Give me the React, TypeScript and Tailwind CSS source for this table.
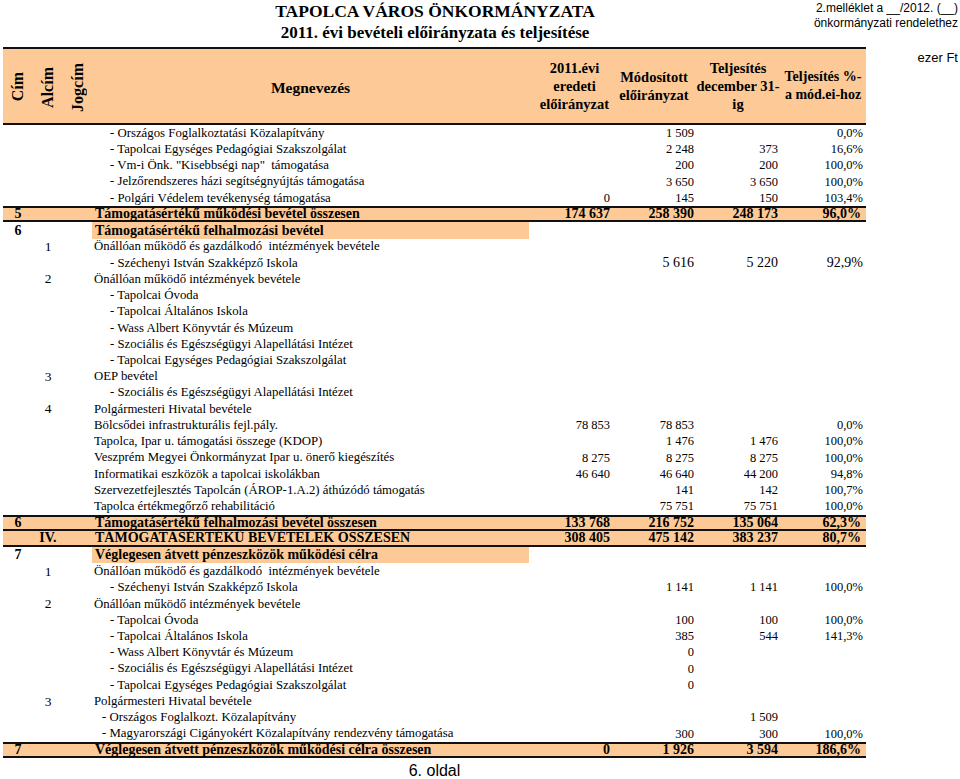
import React from "react";

type Row = {
  kind?: "normal" | "total" | "section";
  cim?: string;
  alcim?: string;
  name: string;
  lvl?: 0 | 1 | 2;
  v?: string[];
  bt?: boolean;
  bb?: boolean;
  big?: boolean;
};

const rows: Row[] = [
  { name: "- Országos Foglalkoztatási Közalapítvány", lvl: 1, v: ["", "1 509", "", "0,0%"] },
  { name: "- Tapolcai Egységes Pedagógiai Szakszolgálat", lvl: 1, v: ["", "2 248", "373", "16,6%"] },
  { name: '- Vm-i Önk. "Kisebbségi nap"  támogatása', lvl: 1, v: ["", "200", "200", "100,0%"] },
  { name: "- Jelzőrendszeres házi segítségnyújtás támogatása", lvl: 1, v: ["", "3 650", "3 650", "100,0%"] },
  { name: "- Polgári Védelem tevékenység támogatása", lvl: 1, v: ["0", "145", "150", "103,4%"] },
  { kind: "total", cim: "5", name: "Támogatásértékű működési bevétel összesen", v: ["174 637", "258 390", "248 173", "96,0%"], bt: true, bb: true },
  { kind: "section", cim: "6", name: "Támogatásértékű felhalmozási bevétel" },
  { alcim: "1", name: "Önállóan működő és gazdálkodó  intézmények bevétele", lvl: 0 },
  { name: "- Széchenyi István Szakképző Iskola", lvl: 1, v: ["", "5 616", "5 220", "92,9%"], big: true },
  { alcim: "2", name: "Önállóan működő intézmények bevétele", lvl: 0 },
  { name: "- Tapolcai Óvoda", lvl: 1 },
  { name: "- Tapolcai Általános Iskola", lvl: 1 },
  { name: "- Wass Albert Könyvtár és Múzeum", lvl: 1 },
  { name: "- Szociális és Egészségügyi Alapellátási Intézet", lvl: 1 },
  { name: "- Tapolcai Egységes Pedagógiai Szakszolgálat", lvl: 1 },
  { alcim: "3", name: "OEP bevétel", lvl: 0 },
  { name: "- Szociális és Egészségügyi Alapellátási Intézet", lvl: 1 },
  { alcim: "4", name: "Polgármesteri Hivatal bevétele", lvl: 0 },
  { name: "Bölcsődei infrastrukturális fejl.pály.", lvl: 0, v: ["78 853", "78 853", "", "0,0%"] },
  { name: "Tapolca, Ipar u. támogatási összege (KDOP)", lvl: 0, v: ["", "1 476", "1 476", "100,0%"] },
  { name: "Veszprém Megyei Önkormányzat Ipar u. önerő kiegészítés", lvl: 0, v: ["8 275", "8 275", "8 275", "100,0%"] },
  { name: "Informatikai eszközök a tapolcai iskolákban", lvl: 0, v: ["46 640", "46 640", "44 200", "94,8%"] },
  { name: "Szervezetfejlesztés Tapolcán (ÁROP-1.A.2) áthúzódó támogatás", lvl: 0, v: ["", "141", "142", "100,7%"] },
  { name: "Tapolca értékmegőrző rehabilitáció", lvl: 0, v: ["", "75 751", "75 751", "100,0%"] },
  { kind: "total", cim: "6", name: "Támogatásértékű felhalmozási bevétel összesen", v: ["133 768", "216 752", "135 064", "62,3%"], bt: true, bb: true },
  { kind: "total", alcim: "IV.", name: "TÁMOGATÁSÉRTÉKŰ BEVÉTELEK ÖSSZESEN", v: ["308 405", "475 142", "383 237", "80,7%"], bb: true },
  { kind: "section", cim: "7", name: "Véglegesen átvett pénzeszközök működési célra" },
  { alcim: "1", name: "Önállóan működő és gazdálkodó  intézmények bevétele", lvl: 0 },
  { name: "- Széchenyi István Szakképző Iskola", lvl: 1, v: ["", "1 141", "1 141", "100,0%"] },
  { alcim: "2", name: "Önállóan működő intézmények bevétele", lvl: 0 },
  { name: "- Tapolcai Óvoda", lvl: 1, v: ["", "100", "100", "100,0%"] },
  { name: "- Tapolcai Általános Iskola", lvl: 1, v: ["", "385", "544", "141,3%"] },
  { name: "- Wass Albert Könyvtár és Múzeum", lvl: 1, v: ["", "0", "", ""] },
  { name: "- Szociális és Egészségügyi Alapellátási Intézet", lvl: 1, v: ["", "0", "", ""] },
  { name: "- Tapolcai Egységes Pedagógiai Szakszolgálat", lvl: 1, v: ["", "0", "", ""] },
  { alcim: "3", name: "Polgármesteri Hivatal bevétele", lvl: 0 },
  { name: "- Országos Foglalkozt. Közalapítvány", lvl: 2, v: ["", "", "1 509", ""] },
  { name: "- Magyarországi Cigányokért Közalapítvány rendezvény támogatása", lvl: 2, v: ["", "300", "300", "100,0%"] },
  { kind: "total", cim: "7", name: "Véglegesen átvett pénzeszközök működési célra összesen", v: ["0", "1 926", "3 594", "186,6%"], bt: true, bb: true },
];

const serif = "font-['Liberation_Serif','Times_New_Roman',serif]";
const sans = "font-['Liberation_Sans',Arial,sans-serif]";

function TableRow({ r }: { r: Row }) {
  const total = r.kind === "total";
  const section = r.kind === "section";
  const v = r.v ?? ["", "", "", ""];
  const indent =
    total || section ? "pl-[3px]" : r.lvl === 1 ? "pl-[18px]" : r.lvl === 2 ? "pl-[10px]" : "pl-[2px]";
  const numSize = total ? "text-[14px] font-bold" : r.big ? "text-[14px]" : "text-[12.5px]";
  return (
    <div
      className={[
        "flex h-[16.24px] items-center leading-none text-black",
        total ? "bg-[#fdca97]" : "",
        r.bt ? "border-t-2 border-[#111]" : "",
        r.bb ? "border-b-2 border-[#111]" : "",
      ].join(" ")}
    >
      <div className={"w-[30px] text-center " + (total || section ? "text-[14px] font-bold" : "text-[13px]")}>{r.cim}</div>
      <div className={"w-[30px] text-center " + (total ? "text-[14px] font-bold" : "text-[13.5px]")}>{r.alcim}</div>
      <div className="w-[29px]" />
      <div
        className={[
          "w-[437px] h-full flex items-center whitespace-pre",
          indent,
          total || section ? "text-[14px] font-bold" : "text-[12.8px]",
          section ? "bg-[#fdca97]" : "",
        ].join(" ")}
      >
        {r.name}
      </div>
      <div className={"w-[83px] text-right pr-[2px] " + numSize}>{v[0]}</div>
      <div className={"w-[84px] text-right pr-[2px] " + numSize}>{v[1]}</div>
      <div className={"w-[84px] text-right pr-[2px] " + numSize}>{v[2]}</div>
      <div className={"w-[86px] text-right " + (total ? "pr-[5px] " : "pr-[3px] ") + numSize}>{v[3]}</div>
    </div>
  );
}

function Vert({ t, w }: { t: string; w: string }) {
  return (
    <div className={w + " h-full flex items-center justify-center pt-[2px]"}>
      <span className="[writing-mode:vertical-rl] rotate-180 text-[16px] leading-none">{t}</span>
    </div>
  );
}

export default function App() {
  return (
    <div className={"w-[960px] h-[779px] bg-white overflow-hidden text-black " + serif}>
      <div className="flex h-[47px]">
        <div className="ml-[85px] w-[700px] text-center font-bold leading-[22px]">
          <div className="text-[17.5px]">TAPOLCA VÁROS ÖNKORMÁNYZATA</div>
          <div className="text-[17px]">2011. évi bevételi előirányzata és teljesítése</div>
        </div>
        <div className={"ml-auto pr-[2px] pt-[1px] text-right text-[12px] leading-[15px] " + sans}>
          <div>2.melléklet a __/2012. (__)</div>
          <div>önkormányzati rendelethez</div>
        </div>
      </div>
      <div className="flex">
        <div className="ml-[3px] w-[863px]">
          <div className="flex h-[78px] items-center border-y-2 border-[#111] bg-[#fdca97] font-bold">
            <Vert t="Cím" w="w-[30px]" />
            <Vert t="Alcím" w="w-[30px]" />
            <Vert t="Jogcím" w="w-[29px]" />
            <div className="w-[437px] text-center text-[15.5px] pt-[4px]">Megnevezés</div>
            <div className="w-[83px] pl-[8px] text-center text-[14.5px] leading-[18px]">
              2011.évi
              <br />
              eredeti
              <br />
              előirányzat
            </div>
            <div className="w-[84px] text-center text-[14.5px] leading-[18px]">
              Módosított
              <br />
              előirányzat
            </div>
            <div className="w-[84px] text-center text-[14.5px] leading-[18px] whitespace-nowrap">
              Teljesítés
              <br />
              december 31-
              <br />
              ig
            </div>
            <div className="w-[86px] text-center text-[14px] leading-[18px] whitespace-nowrap">
              Teljesítés %-
              <br />
              a mód.ei-hoz
            </div>
          </div>
          {rows.map((r, i) => (
            <TableRow key={i} r={r} />
          ))}
          <div className={"mt-[4px] text-center text-[16px] leading-[18px] " + sans}>6. oldal</div>
        </div>
        <div className={"flex-1 pr-[2px] pt-[3px] text-right text-[13px] leading-[16px] " + sans}>ezer Ft</div>
      </div>
    </div>
  );
}
